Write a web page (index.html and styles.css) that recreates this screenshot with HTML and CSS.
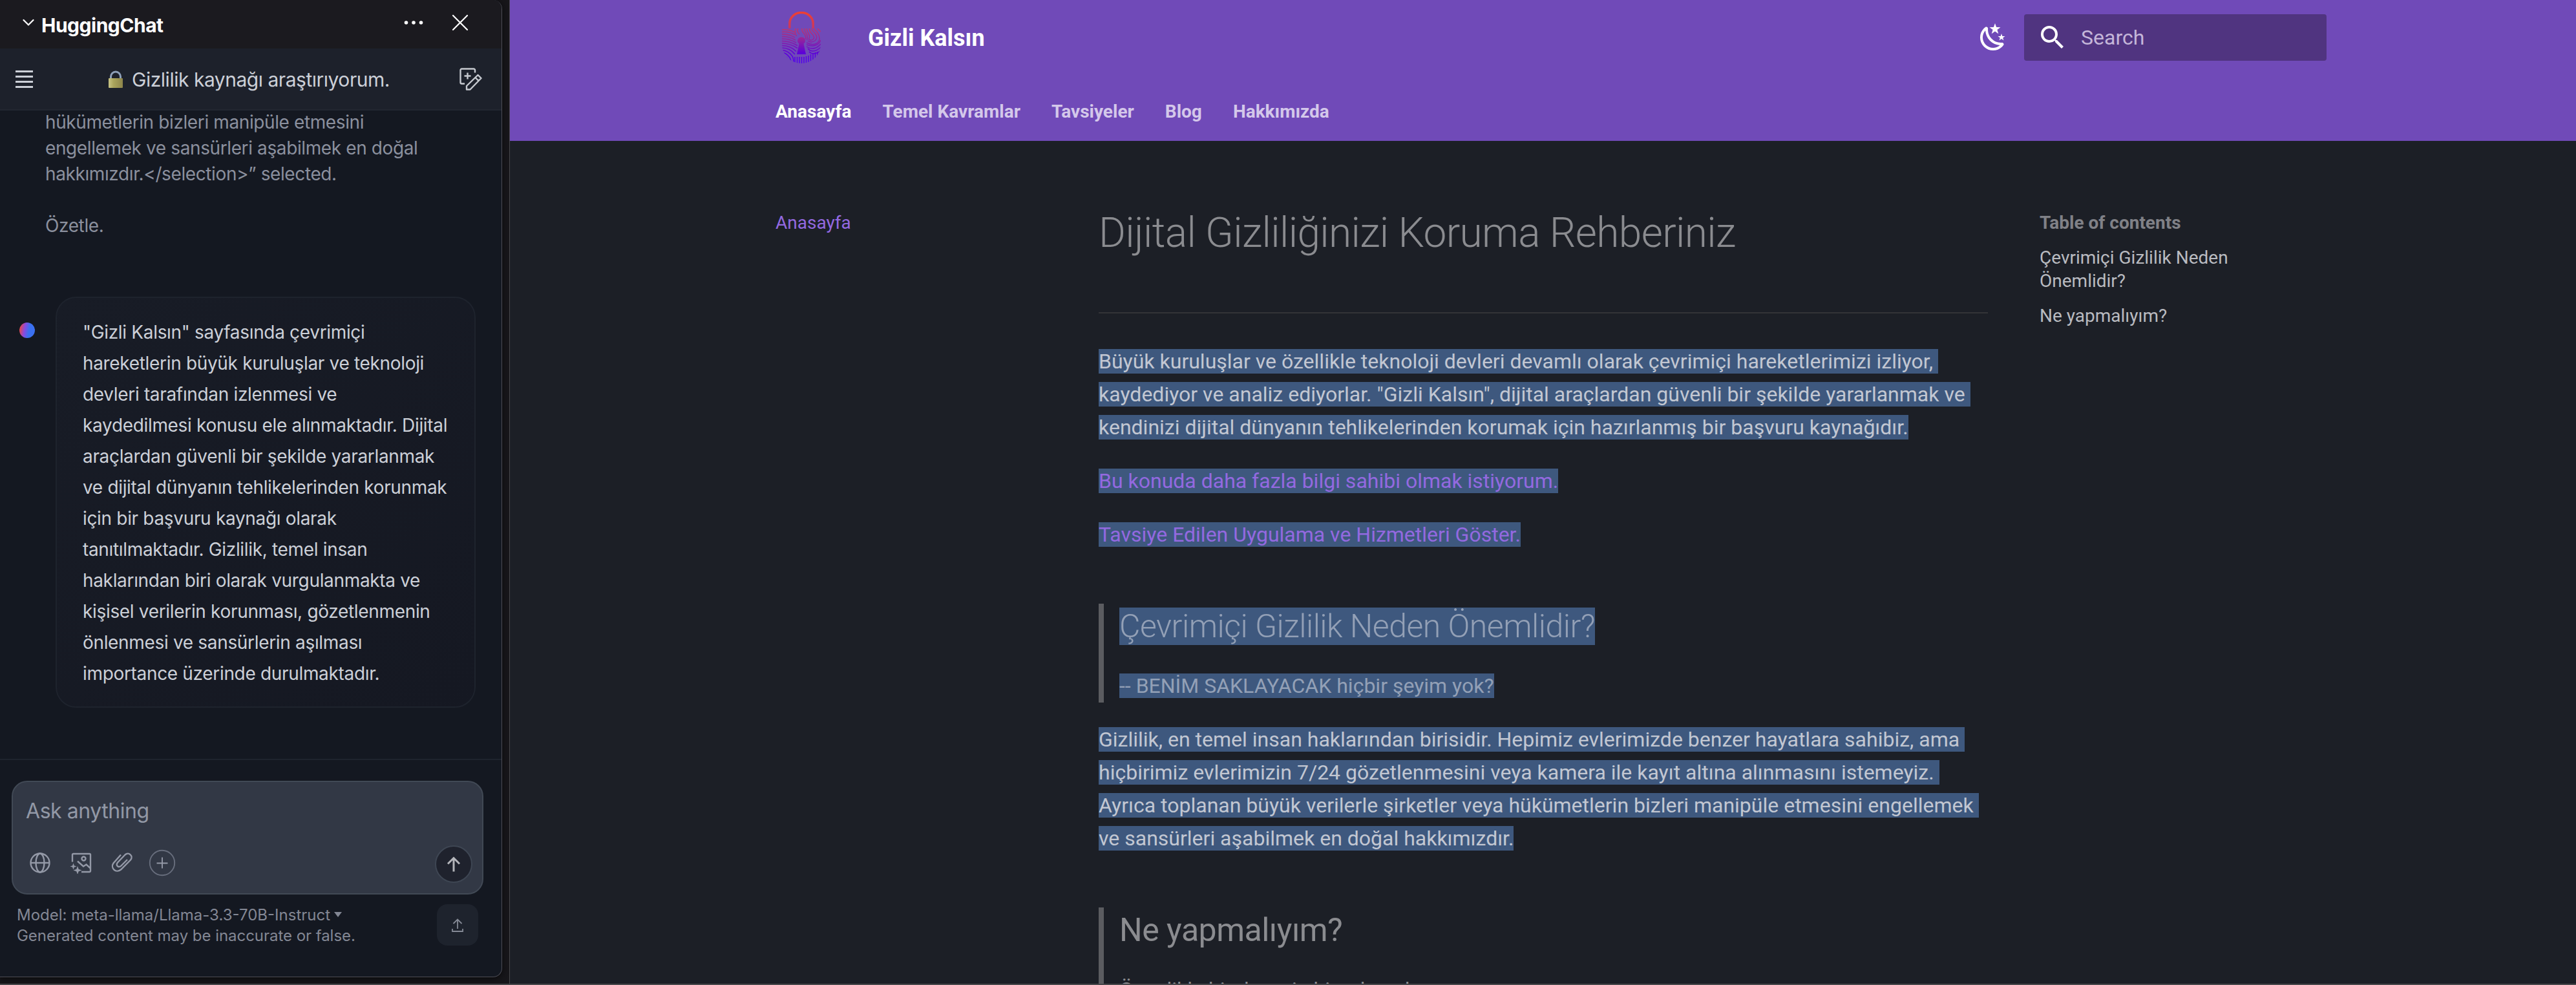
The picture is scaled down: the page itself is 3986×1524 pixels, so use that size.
FILE: index.html
```html
<!DOCTYPE html>
<html lang="tr">
<head>
<meta charset="utf-8">
<title>Gizli Kalsın</title>
<link rel="stylesheet" href="styles.css">
</head>
<body>
<div class="window">
  <aside class="panel">
    <header class="panel-head">
      <svg class="chevron" width="18" height="12" viewBox="0 0 18 12"><path d="M1.5 2 9 9.500 16.500 2"/></svg>
      <h2 class="panel-title">HuggingChat</h2>
      <svg class="dots" width="30" height="8" viewBox="0 0 30 8"><circle cx="3.500" cy="4" r="2.800"/><circle cx="15" cy="4" r="2.800"/><circle cx="26.500" cy="4" r="2.800"/></svg>
      <svg class="close" width="26" height="26" viewBox="0 0 26 26"><path d="M2 2 24 24M24 2 2 24"/></svg>
    </header>
    <nav class="chat-head">
      <svg class="menu" width="27" height="27" viewBox="0 0 27 27"><path d="M0 1.500h27M0 9.500h27M0 17.500h27M0 25.500h27"/></svg>
      <div class="chat-name">
        <svg width="24" height="28" viewBox="0 0 24 28"><defs><linearGradient id="brass"><stop offset="0" stop-color="#c9c585"/><stop offset=".35" stop-color="#aaa45c"/><stop offset="1" stop-color="#8d854b"/></linearGradient></defs><path d="M4.500 13V9.500a7.500 7.500 0 0 1 15 0V13" fill="none" stroke="#8d9fb8" stroke-width="3"/><rect x="1" y="12" width="22" height="15" rx="1" fill="url(#brass)"/></svg>
        <span>Gizlilik kaynağı araştırıyorum.</span>
      </div>
      <svg class="compose" width="35" height="35" viewBox="0 0 35 35"><path d="M24 7.500V3.500a2 2 0 0 0-2-2H3.500a2 2 0 0 0-2 2v19a2 2 0 0 0 2 2H8M12.500 7.500v10M7.500 12.500h10M11 33.500v-5.500L28.500 11l5 5L16.500 33.500zM24.500 15l5 5"/></svg>
    </nav>
    <div class="thread">
      <p class="asked">hükümetlerin bizleri manipüle etmesini<br>engellemek ve sansürleri aşabilmek en doğal<br>hakkımızdır.&lt;/selection&gt;” selected.<br><br>Özetle.</p>
      <div class="reply">
        <i class="avatar"></i>
        <p class="bubble">"Gizli Kalsın" sayfasında çevrimiçi<br>hareketlerin büyük kuruluşlar ve teknoloji<br>devleri tarafından izlenmesi ve<br>kaydedilmesi konusu ele alınmaktadır. Dijital<br>araçlardan güvenli bir şekilde yararlanmak<br>ve dijital dünyanın tehlikelerinden korunmak<br>için bir başvuru kaynağı olarak<br>tanıtılmaktadır. Gizlilik, temel insan<br>haklarından biri olarak vurgulanmakta ve<br>kişisel verilerin korunması, gözetlenmenin<br>önlenmesi ve sansürlerin aşılması<br>importance üzerinde durulmaktadır.</p>
      </div>
    </div>
    <footer class="composer">
      <div class="box">
        <div class="placeholder">Ask anything</div>
        <div class="tools">
          <svg width="32" height="32" viewBox="0 0 32 32"><circle cx="16" cy="16" r="14.500"/><ellipse cx="16" cy="16" rx="6.500" ry="14.500"/><path d="M1.500 16h29"/></svg>
          <svg width="34" height="34" viewBox="0 0 34 34"><path d="M4 15.500V4.500a1.500 1.500 0 0 1 1.500-1.500h25a1.500 1.500 0 0 1 1.500 1.500v25a1.500 1.500 0 0 1-1.500 1.500H18M12 14.500l9 8 4.500-3 6.500 6"/><circle cx="21.500" cy="10.500" r="3"/><path class="solid" d="m5.500 17.500 1.300 3.700 3.700 1.300-3.700 1.300-1.300 3.700-1.300-3.700L.5 22.500l3.700-1.300zM12 22l1.700 4.800 4.800 1.700-4.800 1.700L12 35l-1.700-4.800-4.800-1.700 4.800-1.700z"/></svg>
          <svg width="34" height="32" viewBox="0 0 34 32"><path d="M15 3.500 3.500 16.500c-5 7 3.500 16.500 11.500 10L30 11.500c5-6-3-13-8.500-8L10 15.500c-4 5 2 8.500 5.500 5L25 11"/></svg>
          <svg class="plus" width="42" height="42" viewBox="0 0 42 42"><circle cx="21" cy="21" r="19.200"/><path d="M21 12.500v17M12.500 21.500h17"/></svg>
          <span class="send"><svg width="22" height="24" viewBox="0 0 22 24"><path d="M11 23.500V3M2 11.500 11 2.500l9 9"/></svg></span>
        </div>
      </div>
      <div class="notes">
        <p>Model: meta-llama/Llama-3.3-70B-Instruct<svg width="12" height="8" viewBox="0 0 12 8"><path d="M0 0h12L6 8z"/></svg><br><span class="warn">Generated content may be inaccurate or false.</span></p>
        <span class="share"><svg width="18" height="21" viewBox="0 0 18 21"><path d="M9 16V1.500M2.500 8 9 1.500 15.500 8M1 16v4h16v-4"/></svg></span>
      </div>
    </footer>
  </aside>

  <div class="site">
    <header class="top">
      <div class="bar">
        <svg class="logo" width="60" height="80" viewBox="0 0 60 80">
          <defs>
            <linearGradient id="ink" x1="0" y1="0" x2="0" y2="80" gradientUnits="userSpaceOnUse"><stop offset="0" stop-color="#f04030"/><stop offset=".3" stop-color="#c83860"/><stop offset=".58" stop-color="#8c1ea6"/><stop offset=".8" stop-color="#5c00d8"/><stop offset="1" stop-color="#5000f0"/></linearGradient>
            <clipPath id="shield"><path d="M0 26h60v25a30 29 0 0 1-60 0z"/></clipPath>
          </defs>
          <path d="M11.800 26V18.500a18.200 17 0 0 1 36.400 0V26" fill="none" stroke="url(#ink)" stroke-width="3.600"/>
          <g clip-path="url(#shield)" fill="none" stroke="url(#ink)" stroke-width="1.500">
            <path d="M0 28q10-1 20 4M0 31.500q10-1 20 4M0 35q12 0 20 5M0 38.500q12 0 21 5.500M0 42q12 0 22 6M0 45.500q12 0 24 7M0 49q12 0 24 7.500M0 52.500q13 0 22 9M0 56q12 0 20 10M0 59.500q10 1 16 9.500 2 3 2 10M0 63q7 1 12 8 2 3 2 8M0 67q6 1 9 6 2 3 2 6M21 26q-2 8 2 12M27 35q-5-5-2-9M31 26q-1 4 3 8t2 9M34.500 26q0 4 3 8t1 10 M38 26q1 5 3.500 9t0 7M20 70v10M23.500 70v10M27 70v10M30.500 70v10M34 70v10M37.500 69v11M41 68v12M44.500 66v14M48 64v14M51.500 63v12M55 62v10"/>
            <path d="M42 26q1 5 4 8 6 6 2 9t-7-1M46 26q0 3 4 6 7 8 1 13-6 4-11 0M50 26q0 2 4 5 8 12 0 18-7 4-16-1M55 26l5 5M60 44q-3 8-12 9-6 0-10-2M60 50q-6 7-13 7-5 0-9-3M60 55q-6 6-12 6-5 0-8-4M60 60q-6 5-11 5-4 0-7-3"/>
          </g>
          <path d="M30 39.500a5.500 5.500 0 0 1 3.500 10L37 66H23l3.500-16.500a5.500 5.500 0 0 1 3.500-10z" fill="url(#ink)"/>
        </svg>
        <span class="brand">Gizli Kalsın</span>
        <svg class="moon" width="48" height="48" viewBox="0 0 24 24"><path d="m17.750 4.090-2.530 1.940.91 3.060-2.630-1.810-2.630 1.810.91-3.060-2.530-1.940L12.440 4l1.060-3 1.060 3 3.190.09m3.500 6.910-1.640 1.250.59 1.980-1.700-1.170-1.700 1.170.59-1.980L15.750 11l2.060-.05L18.500 9l.69 1.950 2.060.05m-2.280 4.950c.83-.08 1.720 1.100 1.190 1.850-.32.45-.66.87-1.080 1.270C15.170 23 8.840 23 4.940 19.070c-3.910-3.900-3.910-10.240 0-14.140.4-.4.82-.76 1.270-1.080.75-.53 1.930.36 1.850 1.190-.27 2.860.69 5.830 2.890 8.020a9.960 9.960 0 0 0 8.020 2.890m-1.640 2.020a12.080 12.080 0 0 1-7.800-3.470c-2.170-2.190-3.330-5-3.490-7.820-2.810 3.140-2.700 7.960.31 10.980 3.020 3.010 7.840 3.120 10.980.31Z"/></svg>
        <div class="search"><svg width="48" height="48" viewBox="0 0 24 24"><path d="M9.500 3A6.500 6.500 0 0 1 16 9.500c0 1.610-.59 3.090-1.560 4.230l.27.27h.79l5 5-1.500 1.500-5-5v-.79l-.27-.27A6.516 6.516 0 0 1 9.500 16 6.500 6.500 0 0 1 3 9.500 6.500 6.500 0 0 1 9.500 3m0 2C7 5 5 7 5 9.500S7 14 9.500 14 14 12 14 9.500 12 5 9.500 5Z"/></svg><span>Search</span></div>
      </div>
      <nav class="tabs"><a class="current">Anasayfa</a><a>Temel Kavramlar</a><a>Tavsiyeler</a><a>Blog</a><a>Hakkımızda</a></nav>
    </header>
    <div class="grid">
      <nav class="left"><a>Anasayfa</a></nav>
      <main class="article">
        <h1>Dijital Gizliliğinizi Koruma Rehberiniz</h1>
        <hr>
        <p><mark>Büyük kuruluşlar ve özellikle teknoloji devleri devamlı olarak çevrimiçi hareketlerimizi izliyor, 
kaydediyor ve analiz ediyorlar. "Gizli Kalsın", dijital araçlardan güvenli bir şekilde yararlanmak ve 
kendinizi dijital dünyanın tehlikelerinden korumak için hazırlanmış bir başvuru kaynağıdır.</mark></p>
        <p><a><mark>Bu konuda daha fazla bilgi sahibi olmak istiyorum.</mark></a></p>
        <p><a><mark>Tavsiye Edilen Uygulama ve Hizmetleri Göster.</mark></a></p>
        <blockquote>
          <h2><mark>Çevrimiçi Gizlilik Neden Önemlidir?</mark></h2>
          <p><mark>-- BENİM SAKLAYACAK hiçbir şeyim yok?</mark></p>
        </blockquote>
        <p><mark>Gizlilik, en temel insan haklarından birisidir. Hepimiz evlerimizde benzer hayatlara sahibiz, ama 
hiçbirimiz evlerimizin 7/24 gözetlenmesini veya kamera ile kayıt altına alınmasını istemeyiz. 
Ayrıca toplanan büyük verilerle şirketler veya hükümetlerin bizleri manipüle etmesini engellemek 
ve sansürleri aşabilmek en doğal hakkımızdır.</mark></p>
        <blockquote>
          <h2 class="plain">Ne yapmalıyım?</h2>
          <p>Öncelikle bir deneyin bir adım al</p>
        </blockquote>
      </main>
      <nav class="toc">
        <b>Table of contents</b>
        <a>Çevrimiçi Gizlilik Neden<br>Önemlidir?</a>
        <a>Ne yapmalıyım?</a>
      </nav>
    </div>
  </div>
</div>
<div class="edge"></div>
</body>
</html>
```
FILE: styles.css
```css
* { box-sizing: border-box; margin: 0; padding: 0; }
body { width: 3986px; height: 1524px; overflow: hidden; background: #17161a; display: flex; flex-direction: column; }
svg { display: block; flex: none; }
.window { display: flex; height: 1522px; overflow: hidden; }
.edge { height: 2px; background: #48484b; }

/* chat panel */
.panel { width: 777px; height: 1512px; margin-right: 11px; flex: none; display: flex; flex-direction: column;
  background: #141821; border-right: 1px solid #4c4c55; border-bottom: 1px solid #4c4c55; border-radius: 0 14px 14px 0;
  box-shadow: 0 2px 9px #0a0a0c; overflow: hidden; font-family: Inter, "Liberation Sans", sans-serif; }
.panel-head { height: 75px; background: #1b1a1f; display: flex; align-items: center; padding: 0 51px 5px 35px; flex: none; }
.chevron, .close { fill: none; stroke: #fff; stroke-width: 2.2; stroke-linecap: round; }
.panel-title { font-size: 30px; line-height: 40px; font-weight: 700; color: #fff; margin: 7px auto 0 11px; letter-spacing: -.5px; }
.dots { fill: #fff; margin-right: 44px; }
.chat-head { height: 96px; flex: none; background: #1d212b; border-bottom: 2px solid #222731; display: flex; align-items: center; justify-content: space-between; padding: 0 30px 0 24px; }
.menu { stroke: #ccd0d8; stroke-width: 2.8; }
.chat-name { display: flex; align-items: center; gap: 13px; font-size: 30px; line-height: 40px; color: #ccd0d8; white-space: nowrap; margin: 2px 0 0 8px; letter-spacing: -.48px; }
.compose { fill: none; stroke: #c6c9cf; stroke-width: 2.4; stroke-linejoin: round; }
.thread { height: 1003px; flex: none; padding: 0 40px 0 30px; }
.asked { height: 288px; margin-top: -2px; padding-left: 40px; font-size: 28px; line-height: 40px; color: #8b909e; white-space: nowrap; letter-spacing: -.39px; }
.reply { display: flex; align-items: flex-start; gap: 32px; padding-top: 2px; }
.avatar { width: 24px; height: 24px; margin-top: 40px; border-radius: 50%; flex: none; background: linear-gradient(100deg, #e5484d 8%, #8a4ae0 35%, #3b70f0 60%); }
.bubble { width: 650px; height: 636px; padding: 29px 40px; border: 2px solid #1e232d; border-radius: 32px; background: linear-gradient(135deg, #181c26, #151822);
  font-size: 28px; line-height: 48px; color: #ccd0d8; white-space: nowrap; letter-spacing: -.33px; }
.composer { flex: 1; border-top: 2px solid #1f242e; padding: 32px 28px 0 18px; }
.box { height: 176px; border: 2px solid #414955; border-radius: 24px; background: #323845; padding: 24px 15px 0 20px; }
.placeholder { font-size: 32px; line-height: 40px; margin-top: 1px; color: #9298a6; letter-spacing: -.45px; }
.tools { display: flex; align-items: center; margin-top: 29px; fill: none; stroke: #9499a7; stroke-width: 2.4; padding-left: 6px; }
.tools > svg { margin-right: 30px; }
.tools > svg.plus { margin: 0; margin-left: -6px; stroke-width: 1.9; }
.plus circle { stroke: #686e7d; }
.tools .solid { fill: #9499a7; stroke: none; }
.send { width: 58px; height: 58px; margin: 4px 0 0 auto; border: 2px solid #3e4653; border-radius: 50%; background: #1f222d; display: flex; align-items: center; justify-content: center; stroke: #b4b5ba; stroke-width: 3; }
.notes { display: flex; justify-content: space-between; padding: 15px 8px 0 8px; }
.notes p { font-size: 24px; line-height: 32px; margin-top: 1px; color: #838794; white-space: nowrap; }
.notes p svg { display: inline-block; fill: #838794; margin-left: 6px; vertical-align: 5px; }
.warn { letter-spacing: -.04px; }
.share { width: 64px; height: 64px; border-radius: 16px; background: #1e232d; display: flex; align-items: center; justify-content: center; fill: none; stroke: #858a96; stroke-width: 1.8; }

/* documentation site */
.site { flex: 1; border-left: 1px solid #47474a; background: #1c1f26; font-family: Roboto, "Liberation Sans", sans-serif; color: #b9bbc0; }
.top { height: 218px; background: #704ab8; padding: 0 386px 0 411px; }
.bar { height: 116px; display: flex; align-items: center; padding-left: 10px; }
.brand { font-size: 36px; font-weight: 700; color: #fff; margin: 2px auto 0 73px; }
.moon { fill: #fff; margin-right: 24px; }
.search { width: 468px; height: 72px; border-radius: 4px; background: #503480; display: flex; align-items: center; gap: 20px; padding-left: 20px; fill: #fff; color: #c4b6d9; font-size: 32px; }
.tabs { display: flex; gap: 48px; margin-top: 40px; font-size: 28px; line-height: 33px; font-weight: 700; color: #d4c8ea; }
.tabs .current { color: #fff; }
.grid { display: flex; padding: 100px 0 0 411px; }
.left { width: 500px; color: #9369e0; font-size: 28px; line-height: 36px; padding-top: 9px; }
.article { width: 1376px; font-size: 32px; line-height: 51.2px; white-space: pre; }
.article h1 { font-size: 64px; line-height: 83.2px; font-weight: 300; letter-spacing: -.64px; color: #8b8c90; margin-top: 1px; }
.article, blockquote { display: flex; flex-direction: column; }
hr { border: 0; height: 2px; background: #333437; margin: 80.800px 0 16.500px; }
.article p { margin-top: 32px; }
.article a { color: #9369e0; }
mark { background: #3e587e; color: #c2c7d2; }
a mark { color: inherit; }
blockquote { margin-top: 80px; border-left: 8px solid #5b5c60; padding-left: 24px; color: #8b8c90; }
blockquote + p { margin-top: 32px; }
blockquote mark { color: #93a0b6; }
h2 { font-size: 50px; line-height: 70px; font-weight: 300; letter-spacing: -.5px; }
.article .plain { font-weight: 400; }
.toc { margin-left: 80px; padding-top: 9px; font-size: 28px; line-height: 36.400px; white-space: nowrap; display: flex; flex-direction: column; gap: 17.500px; }
.toc b { color: #808187; }
```
